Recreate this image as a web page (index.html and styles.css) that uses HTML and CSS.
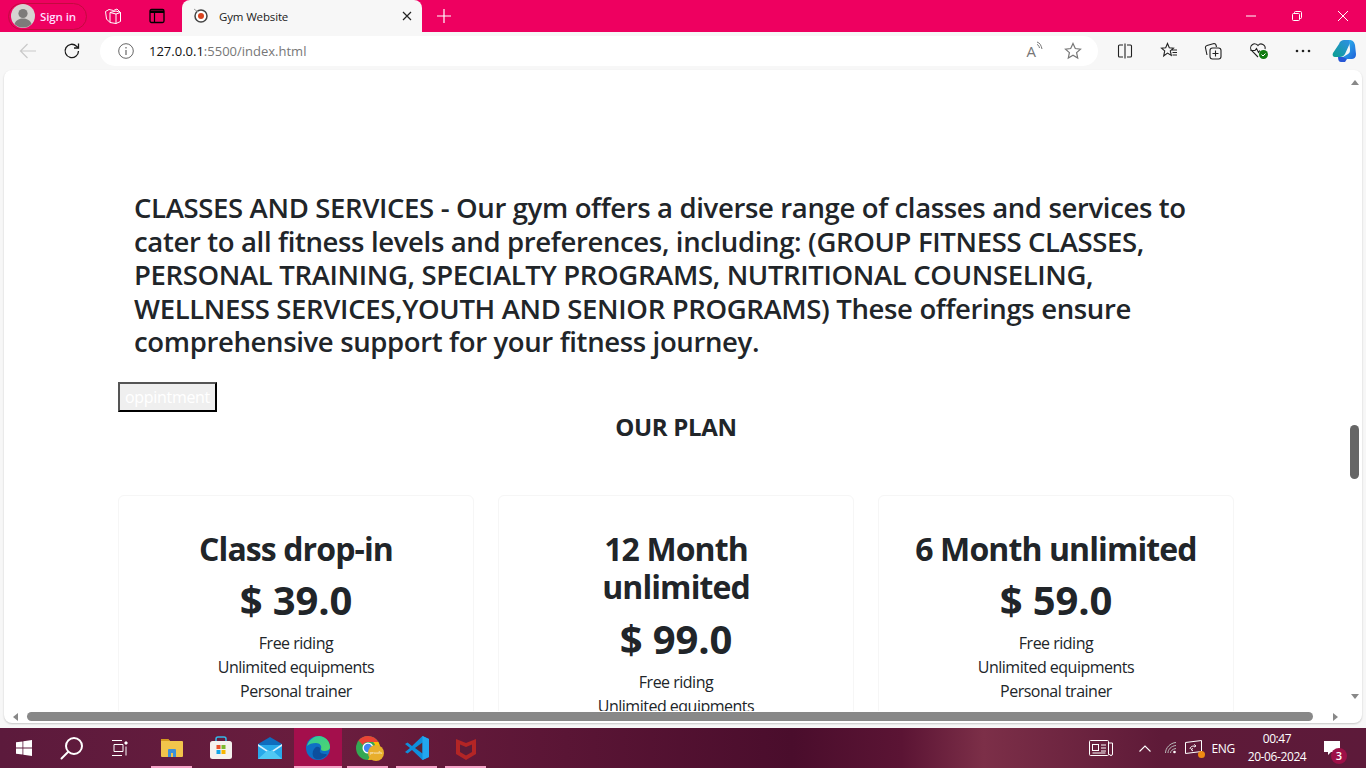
FILE: index.html
```html
<!DOCTYPE html>
<html lang="en">
<head>
<meta charset="utf-8">
<title>Gym Website</title>
<link rel="stylesheet" href="styles.css">
</head>
<body>
<header class="titlebar">
  <div class="profile">
    <span class="avatar"><svg viewBox="0 0 24 24" width="24" height="24"><circle cx="12" cy="12" r="12" fill="#d6d3d1"/><circle cx="12" cy="9.5" r="4.6" fill="#7d7b7a"/><path d="M3.5 20c1.5-4.200 5-5.500 8.500-5.500s7 1.300 8.500 5.500a12 12 0 0 1-17 0z" fill="#7d7b7a"/></svg></span>
    <span class="profile-label">Sign in</span>
  </div>
  <button class="tb-btn"><svg viewBox="0 0 18 18" width="18" height="18" fill="none" stroke="#fff" stroke-width="1"><path d="M1.500 4.500 5 2.500l4.500 1L13 2l3.500 3.500v9L12 16.500 6 15.500 2.500 12z"/><path d="M6 5.500 12 4l4.500 1.500M6 5.500v10M12 7v9.500M6 5.500l6 1.500 4.500-1.500"/></svg></button>
  <button class="tb-btn tb-btn-tight"><svg viewBox="0 0 16 16" width="16" height="16"><rect x="1" y="1.500" width="14" height="13" rx="1.500" fill="none" stroke="#000" stroke-width="1.300"/><path d="M1 2.500h14V5H1z" fill="#000"/><path d="M5.500 5v9" stroke="#000" stroke-width="1.200"/></svg></button>
  <div class="tab">
    <svg class="favicon" viewBox="0 0 16 16" width="16" height="16"><circle cx="8" cy="8" r="6" fill="#fff" stroke="#444" stroke-width="1.500"/><circle cx="8" cy="8" r="3" fill="#d9441f"/><path d="M1 1 5 4" stroke="#999"/></svg>
    <span class="tab-title">Gym Website</span>
    <svg class="tab-close" viewBox="0 0 10 10" width="10" height="10"><path d="M1 1l8 8M9 1l-8 8" stroke="#222" stroke-width="1.200"/></svg>
  </div>
  <button class="tb-btn tb-new"><svg viewBox="0 0 16 16" width="16" height="16"><path d="M8 1v14M1 8h14" stroke="#fff" stroke-width="1.200"/></svg></button>
  <div class="window-controls">
    <svg viewBox="0 0 10 10" width="10" height="10"><path d="M0 5h10" stroke="#fff"/></svg>
    <svg viewBox="0 0 10 10" width="10" height="10" fill="none" stroke="#fff"><rect x=".5" y="2.500" width="7" height="7" rx="1"/><path d="M2.500 2.500v-1a1 1 0 0 1 1-1h5a1 1 0 0 1 1 1v5a1 1 0 0 1-1 1h-1"/></svg>
    <svg viewBox="0 0 10 10" width="10" height="10"><path d="M0 0l10 10M10 0 0 10" stroke="#fff"/></svg>
  </div>
</header>

<nav class="toolbar">
  <button class="nav-btn"><svg viewBox="0 0 18 18" width="18" height="18" fill="none" stroke="#c9c9c9" stroke-width="1.200"><path d="M17 9H1.500M8.500 2 1.500 9l7 7"/></svg></button>
  <button class="nav-btn nav-reload"><svg viewBox="0 0 18 18" width="18" height="18" fill="none" stroke="#1a1a1a" stroke-width="1.300"><path d="M15.500 9a6.700 6.700 0 1 1-2-4.800L15.500 6"/><path d="M15.500 1.500V6H11"/></svg></button>
  <div class="address">
    <svg viewBox="0 0 16 16" width="16" height="16" fill="none" stroke="#666"><circle cx="8" cy="8" r="7.300"/><path d="M8 7v5M8 4v1.500" stroke-width="1.200"/></svg>
    <span class="url"><span class="url-host">127.0.0.1</span>:5500/index.html</span>
    <span class="spacer"></span>
    <span class="read-aloud">A<svg viewBox="0 0 8 10" width="8" height="10" fill="none" stroke="#777"><path d="M1 1c3 1 4 3 5 7M1 3.500c1.500.5 2 1.500 2.500 3.500"/></svg></span>
    <svg class="addr-star" viewBox="0 0 18 18" width="18" height="18" fill="none" stroke="#777" stroke-width="1.200"><path d="M9 1.500l2.300 5 5.200.6-3.900 3.500 1.100 5.400L9 13.300 4.300 16l1.100-5.400-3.900-3.500 5.200-.6z"/></svg>
  </div>
  <div class="tools">
    <svg viewBox="0 0 16 16" width="16" height="16" fill="none" stroke="#222" stroke-width="1.100"><path d="M6 2H2.500a1 1 0 0 0-1 1v10a1 1 0 0 0 1 1H6M10 2h3.500a1 1 0 0 1 1 1v10a1 1 0 0 1-1 1H10M8 .5v15"/></svg>
    <svg viewBox="0 0 18 18" width="18" height="18" fill="none" stroke="#222" stroke-width="1.100"><path d="M7.500 1.500l1.800 4.200 4.200.4-3.200 2.800 1 4.500-3.800-2.300-3.800 2.800 1-5L1.500 6.100l4.200-.4zM12 8h5M12.500 10.500H17M12.500 13H17"/></svg>
    <svg viewBox="0 0 18 18" width="18" height="18" fill="none" stroke="#222" stroke-width="1.100"><path d="M3 13 1.500 6a2 2 0 0 1 1.500-2.500L10 1.500A2 2 0 0 1 12 3l.5 2"/><rect x="6" y="6" width="11" height="11" rx="2.500"/><path d="M11.500 8.500v6M8.500 11.500h6"/></svg>
    <svg viewBox="0 0 20 18" width="20" height="18" fill="none"><path d="M9 15 2.500 8.500a4 4 0 0 1 6.500-5 4 4 0 0 1 7 3.500" stroke="#222" stroke-width="1.100"/><path d="M1.500 8.500H6l1.500-2 2 4 1.300-2" stroke="#222" stroke-width="1.100"/><circle cx="14.500" cy="12.500" r="4.500" fill="#107c10"/><path d="M12.500 12.500l1.500 1.500 2.500-2.500" stroke="#fff"/></svg>
    <svg viewBox="0 0 16 4" width="16" height="4" fill="#222"><circle cx="2" cy="2" r="1.300"/><circle cx="8" cy="2" r="1.300"/><circle cx="14" cy="2" r="1.300"/></svg>
    <svg class="copilot" viewBox="0 0 24 24" width="24" height="24"><defs><linearGradient id="cpa" x1="0" y1="1" x2="1" y2="0"><stop offset="0" stop-color="#0c9f8f"/><stop offset="1" stop-color="#2f8fe8"/></linearGradient><linearGradient id="cpb" x1="0" y1="0" x2="1" y2="1"><stop offset="0" stop-color="#2ec6f0"/><stop offset="1" stop-color="#1f5fd8"/></linearGradient></defs><path d="M7 5c1-3 3-4 5-4h5c2 0 2 2 1 3l-5 11c-1 2-3 3-5 3H3c-2 0-3-2-2-4z" fill="url(#cpa)"/><path d="M17 1c3 0 5 1 6 5l1 9c0 4-2 5-5 5h-6c-2 0-3-1-2-2l5-3c2-1 2-3 2-5z" fill="url(#cpb)"/><path d="M6 18h5l4 2-2 3H9c-2 0-3-2-3-5z" fill="#2757d6"/></svg>
  </div>
</nav>

<main class="browser-page">
  <div class="page-row">
    <div class="viewport">
      <section class="content">
        <p class="lead">CLASSES AND SERVICES - Our gym offers a diverse range of classes and services to cater to all fitness levels and preferences, including: (GROUP FITNESS CLASSES, PERSONAL TRAINING, SPECIALTY PROGRAMS, NUTRITIONAL COUNSELING, WELLNESS SERVICES,YOUTH AND SENIOR PROGRAMS) These offerings ensure comprehensive support for your fitness journey.</p>
        <button class="appoint">oppintment</button>
        <h2 class="plan-heading">OUR PLAN</h2>
        <div class="plans">
          <article class="plan">
            <h3>Class drop-in</h3>
            <div class="price">$ 39.0</div>
            <ul><li>Free riding</li><li>Unlimited equipments</li><li>Personal trainer</li></ul>
          </article>
          <article class="plan">
            <h3>12 Month unlimited</h3>
            <div class="price">$ 99.0</div>
            <ul><li>Free riding</li><li>Unlimited equipments</li><li>Personal trainer</li></ul>
          </article>
          <article class="plan">
            <h3>6 Month unlimited</h3>
            <div class="price">$ 59.0</div>
            <ul><li>Free riding</li><li>Unlimited equipments</li><li>Personal trainer</li></ul>
          </article>
        </div>
      </section>
    </div>
    <div class="vscroll">
      <span class="arrow-up"></span>
      <span class="vtrack"><span class="vthumb"></span></span>
      <span class="arrow-down"></span>
    </div>
  </div>
  <div class="hscroll">
    <span class="arrow-left"></span>
    <span class="hthumb"></span>
    <span class="arrow-right"></span>
  </div>
</main>

<footer class="taskbar">
  <div class="tk-item tk-system"><svg viewBox="0 0 16 16" width="16" height="16" fill="#fff"><path d="M0 2.300 6.500 1.400v6.200H0zM7.300 1.300 16 0v7.600H7.300zM0 8.400h6.500v6.200L0 13.700zM7.300 8.400H16V16l-8.700-1.200z"/></svg></div>
  <div class="tk-item tk-system"><svg viewBox="0 0 24 24" width="24" height="24" fill="none" stroke="#fff" stroke-width="2"><circle cx="14" cy="10" r="8"/><path d="M8 16 1.500 22.500" stroke-linecap="round"/></svg></div>
  <div class="tk-item tk-system tk-system-last"><svg viewBox="0 0 16 16" width="16" height="16" fill="none" stroke="#fff"><path d="M0 .5h10M0 15.500h10M2 4.500h9v7H2z"/><path d="M13 2h2v2h-2z" fill="#fff"/><path d="M14 6.500v9"/></svg></div>
  <div class="tk-item tk-open"><svg viewBox="0 0 22 20" width="22" height="20"><path d="M0 2a1 1 0 0 1 1-1h6l2 2h12a1 1 0 0 1 1 1v14a1 1 0 0 1-1 1H1a1 1 0 0 1-1-1z" fill="#f2c44b"/><path d="M0 1h7l2 2H0z" fill="#d49a1e"/><path d="M7 12a1 1 0 0 1 1-1h6a1 1 0 0 1 1 1v7h-3v-4h-2v4H7z" fill="#3c8fd8"/></svg></div>
  <div class="tk-item"><svg viewBox="0 0 24 24" width="24" height="24"><path d="M7 5V3a2 2 0 0 1 2-2h6a2 2 0 0 1 2 2v2" fill="none" stroke="#35b8e8" stroke-width="1.500"/><rect x="1" y="5" width="22" height="18" rx="2.500" fill="#f4f1ee"/><rect x="7.500" y="9" width="4" height="4" fill="#e8502a"/><rect x="12.500" y="9" width="4" height="4" fill="#7cb82f"/><rect x="7.500" y="14" width="4" height="4" fill="#12a5e8"/><rect x="12.500" y="14" width="4" height="4" fill="#f7b500"/></svg></div>
  <div class="tk-item"><svg viewBox="0 0 24 22" width="24" height="22"><path d="M0 7 12 0l12 7v15H0z" fill="#0f6cbd"/><path d="M0 8h24v14H0z" fill="#28a8ea"/><path d="M0 7l12 8 12-8v2L12 17 0 9z" fill="#d8f0fc"/><path d="M0 22 10 13l2 1.500 2-1.500 10 9z" fill="#50c8f4"/></svg></div>
  <div class="tk-item tk-open tk-active"><svg viewBox="0 0 24 24" width="24" height="24"><defs><linearGradient id="edg" x1="0" y1="0" x2="1" y2="1"><stop offset="0" stop-color="#2fc6a0"/><stop offset="1" stop-color="#51d86a"/></linearGradient></defs><circle cx="12" cy="12" r="12" fill="#0f6fc4"/><path d="M1 10C3 3 9 0 13 0c6 0 11 5 11 11 0 3-3 4-6 4-2 0-3-1-3-2 1-3-1-6-5-6-4 0-7 1-9 3z" fill="url(#edg)"/><path d="M10 11c3-1 5 1 4 3-1 3 2 4 6 4l1 1c-3 3-7 5-11 4-5-2-4-9 0-12z" fill="#0c4f9e"/></svg></div>
  <div class="tk-item tk-open tk-chrome"><svg viewBox="0 0 24 24" width="24" height="24"><circle cx="12" cy="12" r="12" fill="#34a853"/><path d="M12 0a12 12 0 0 1 10.400 6H12a6 6 0 0 0-5.200 3L2.500 4.500A12 12 0 0 1 12 0z" fill="#ea4335"/><path d="M22.400 6A12 12 0 0 1 12 24l5.200-9a6 6 0 0 0 0-9z" fill="#fbbc05"/><circle cx="12" cy="12" r="5.500" fill="#fff"/><circle cx="12" cy="12" r="4.200" fill="#4285f4"/></svg><span class="chrome-badge">proofs</span></div>
  <div class="tk-item tk-open"><svg viewBox="0 0 24 24" width="24" height="24"><path d="M17.500 0 24 3v18l-6.500 3L7 14l-4.500 3.500L0 16l5-4-5-4 2.500-1.500L7 10z" fill="#0f8fdc"/><path d="M17.500 6.500v11L10 12z" fill="#5a2438"/><path d="M17.500 0 24 3v18l-6.500 3z" fill="#22a7f0"/></svg></div>
  <div class="tk-item tk-open"><svg viewBox="0 0 22 24" width="22" height="24"><path d="M1 3 11 7 21 3v15l-10 6L1 18z" fill="#b32525"/><path d="M5 8.500 11 11l6-2.500V16l-6 3.500L5 16z" fill="#5a1c38"/></svg></div>
  <span class="spacer"></span>
  <div class="tray">
    <svg class="tray-news" viewBox="0 0 24 16" width="24" height="16" fill="none" stroke="#fff"><rect x=".5" y=".5" width="19" height="15" rx="1"/><path d="M19.500 3h4v11a1.500 1.500 0 0 1-3 0"/><rect x="3.500" y="4.500" width="6" height="6"/><path d="M12 5h5M12 8h5M12 11h5M3.500 13h13"/></svg>
    <svg class="tray-up" viewBox="0 0 12 7" width="12" height="7" fill="none" stroke="#fff" stroke-width="1.100"><path d="M.5 6.500 6 1l5.500 5.500"/></svg>
    <svg class="tray-wifi" viewBox="0 0 12 12" width="12" height="12" fill="none" stroke="#bbb"><path d="M.5 11C.5 6 5 1 11 .5M3 11c0-3.500 3-7 8-7.500M5.500 11c0-2 2-4 5.500-4.500"/><circle cx="9.500" cy="10" r="1.300" fill="#fff" stroke="none"/></svg>
    <span class="tray-net"><svg viewBox="0 0 18 16" width="18" height="16" fill="none" stroke="#fff"><path d="M.5 2.500 16.500.5v11l-16 2z"/><path d="M5 9c0-2 2-3 4-3M9 4.500 11 6 9 7M8 11l-2-1.500 2-1"/></svg><span class="tray-dot"></span></span>
    <span class="tray-lang">ENG</span>
    <span class="clock"><span>00:47</span><span>20-06-2024</span></span>
    <span class="notify"><svg viewBox="0 0 16 14" width="16" height="14" fill="#fff"><path d="M0 0h16v11H7l-3 3v-3H0z"/></svg><span class="notify-count">3</span></span>
  </div>
</footer>
</body>
</html>
```
FILE: styles.css
```css
* { box-sizing: border-box; }
html, body { margin: 0; padding: 0; height: 768px; width: 1366px; overflow: hidden; }
body { display: flex; flex-direction: column; background: #f7f7f7; font-family: "Open Sans", "Noto Sans", sans-serif; color: #212529; }
button { border: 0; background: none; padding: 0; margin: 0; font: inherit; }
svg { display: block; flex: none; }
.spacer { flex: 1; }

.titlebar { height: 32px; flex: none; background: #ee0060; display: flex; align-items: center; padding-left: 8px; }
.profile { width: 79px; height: 27px; border: 1px solid #c30a3f; border-radius: 14px; display: flex; align-items: center; gap: 5px; padding-left: 2px; }
.profile-label { color: #fdf; font-size: 11.500px; font-weight: 600; letter-spacing: -.1px; }
.tb-btn { width: 18px; height: 18px; margin-left: 17px; }
.tb-btn-tight { margin-left: 27px; width: 16px; height: 16px; }
.tab { width: 240px; height: 32px; margin-left: 17px; background: #f7f7f7; border-radius: 8px 8px 0 0; display: flex; align-items: center; padding: 0 10px 0 11px; }
.favicon { margin-right: 10px; }
.tab-title { font-size: 11.500px; letter-spacing: -.15px; color: #222; flex: 1; }
.tb-new { margin-left: 14px; width: 16px; height: 16px; }
.window-controls { margin-left: auto; display: flex; align-items: center; gap: 36px; padding-right: 18px; }

.toolbar { height: 38px; flex: none; display: flex; align-items: center; background: #f7f7f7; padding-left: 19px; }
.nav-btn { width: 18px; height: 18px; }
.nav-reload { margin-left: 26px; }
.address { width: 998px; height: 30px; margin-left: 19px; background: #fff; border-radius: 15px; display: flex; align-items: center; padding-left: 18px; padding-right: 16px; }
.url { margin-left: 15px; font-size: 13px; color: #777; }
.url-host { color: #111; }
.read-aloud { display: flex; font-size: 15px; color: #777; align-items: flex-start; margin-right: 20px; }
.tools { display: flex; align-items: center; gap: 26.500px; margin-left: 19px; }
.copilot { margin-left: -6px; }

.browser-page { flex: none; height: 653px; margin: 0 4px; background: #fff; border-radius: 8px; display: flex; flex-direction: column; overflow: hidden; box-shadow: 0 1px 2px rgba(0,0,0,.2); }
.page-row { flex: 1; min-height: 0; display: flex; }
.viewport { flex: 1; min-width: 0; overflow: hidden; }
.content { padding: 121px 116px 0 114px; }
.lead { width: 1066px; margin: 0 0 23px 16px; font-size: 27.500px; line-height: 33.600px; font-weight: 600; letter-spacing: -.35px; color: #212529; }
.appoint { display: block; width: 99px; height: 30px; background: #efefef; color: #fff; font-size: 16px; border: 2px solid; border-color: #555 #000 #000 #555; letter-spacing: -.3px; }
.plan-heading { margin: 0; height: 83px; text-align: center; font-size: 24px; line-height: 30px; font-weight: 700; letter-spacing: -.3px; color: #212529; }
.plans { display: flex; gap: 24px; }
.plan { width: 356px; border: 1px solid #f6f6f6; border-radius: 6px; text-align: center; padding: 34px 32px 60px; }
.plan h3 { margin: 0 0 8px; font-size: 32px; line-height: 38.400px; font-weight: 700; letter-spacing: -.9px; }
.price { font-size: 40px; line-height: 48px; font-weight: 700; letter-spacing: -.15px; margin-bottom: 7px; }
.plan ul { margin: 0; padding: 0; list-style: none; font-size: 16px; line-height: 24px; letter-spacing: -.5px; }

.vscroll { width: 12px; flex: none; display: flex; flex-direction: column; align-items: center; padding: 10px 3px 0 0; }
.arrow-up { width: 0; height: 0; border: 4px solid transparent; border-top: 0; border-bottom: 5px solid #888; }
.vtrack { flex: 1; width: 100%; padding-top: 340px; display: flex; justify-content: center; }
.vthumb { width: 9px; height: 54px; background: #666; border-radius: 5px; }
.arrow-down { width: 0; height: 0; border: 4px solid transparent; border-bottom: 0; border-top: 5px solid #888; margin-bottom: 12px; }
.hscroll { height: 12px; flex: none; display: flex; align-items: center; padding: 0 0 1px 9px; }
.arrow-left { width: 0; height: 0; border: 4px solid transparent; border-left: 0; border-right: 5px solid #888; }
.hthumb { width: 1286px; height: 9px; border-radius: 5px; background: #888; margin-left: 9px; }
.arrow-right { width: 0; height: 0; border: 4px solid transparent; border-right: 0; border-left: 5px solid #888; margin-left: 20px; }

.taskbar { height: 40px; flex: none; margin-top: 5px; display: flex; align-items: center; background: linear-gradient(90deg, #5c1a3c 0%, #6a1d3e 25%, #4a0d2c 58%, #5b1434 66%, #7c2f48 72%, #5e1a38 85%, #5d1a3a 100%); }
.tk-item { width: 49px; height: 40px; display: flex; align-items: center; justify-content: center; position: relative; flex: none; }
.tk-system { width: 48px; }
.tk-system-last { margin-right: 3px; }
.tk-open::after { content: ""; position: absolute; left: 4px; right: 4px; bottom: 0; height: 2px; background: #f5a3c7; }
.tk-active { background: #a40f4c; width: 48px; margin-right: 1px; }
.tk-active::after { left: 0; right: 0; }
.chrome-badge { position: absolute; right: 8px; bottom: 7px; width: 16px; height: 16px; border-radius: 50%; background: #e8ae2c; color: #fff; font-size: 4px; line-height: 16px; text-align: center; }
.tray { display: flex; align-items: center; height: 40px; color: #fff; padding-right: 22px; }
.tray-news { margin-right: 26px; }
.tray-up { margin-right: 14px; }
.tray-wifi { margin-right: 8px; }
.tray-net { position: relative; display: block; margin-right: 8px; }
.tray-dot { position: absolute; right: -2px; bottom: -2px; width: 7px; height: 7px; border-radius: 50%; background: #f08a12; }
.tray-lang { font-size: 12px; margin-right: 12px; letter-spacing: -.3px; }
.clock { display: flex; flex-direction: column; align-items: center; font-size: 12px; line-height: 18px; letter-spacing: -.4px; width: 60px; margin-right: 17px; }
.notify { position: relative; display: block; width: 20px; }
.notify-count { position: absolute; left: 7px; top: 7px; width: 16px; height: 16px; border-radius: 50%; background: #9e1048; color: #fff; font-size: 11px; line-height: 16px; text-align: center; font-weight: 600; }
```
